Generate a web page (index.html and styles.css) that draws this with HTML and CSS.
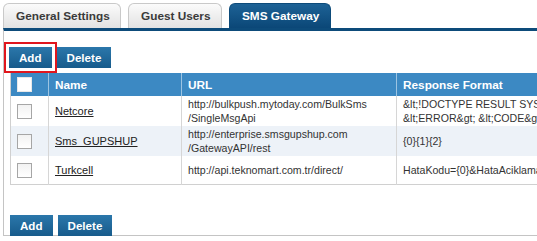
FILE: index.html
```html
<!DOCTYPE html>
<html lang="en">
<head>
    <meta charset="UTF-8">
    <title>SMS Gateway</title>
    <link rel="stylesheet" href="styles.css">
</head>
<body>

    <div class="tabs">
        <a class="tab" href="#">General Settings</a>
        <a class="tab" href="#">Guest Users</a>
        <a class="tab active" href="#">SMS Gateway</a>
    </div>

    <div class="panel">
        <div class="toolbar top">
            <button class="btn highlight">Add</button>
            <button class="btn">Delete</button>
        </div>

        <table class="grid">
            <colgroup>
                <col class="col-check">
                <col class="col-name">
                <col class="col-url">
                <col class="col-format">
            </colgroup>
            <thead>
                <tr>
                    <th><span class="check head-check"></span></th>
                    <th>Name</th>
                    <th>URL</th>
                    <th>Response Format</th>
                </tr>
            </thead>
            <tbody>
                <tr>
                    <td><span class="check"></span></td>
                    <td><a href="#">Netcore</a></td>
                    <td>http://bulkpush.mytoday.com/BulkSms<br>/SingleMsgApi</td>
                    <td>&amp;lt;!DOCTYPE RESULT SYSTEM &amp;quot;<br>&amp;lt;ERROR&amp;gt; &amp;lt;CODE&amp;gt;{0}&amp;lt;/CODE&amp;gt;</td>
                </tr>
                <tr class="alt">
                    <td><span class="check"></span></td>
                    <td><a href="#">Sms_GUPSHUP</a></td>
                    <td>http://enterprise.smsgupshup.com<br>/GatewayAPI/rest</td>
                    <td>{0}{1}{2}</td>
                </tr>
                <tr>
                    <td><span class="check"></span></td>
                    <td><a href="#">Turkcell</a></td>
                    <td>http://api.teknomart.com.tr/direct/</td>
                    <td>HataKodu={0}&amp;HataAciklama={1}</td>
                </tr>
            </tbody>
        </table>

        <div class="toolbar bottom">
            <button class="btn">Add</button>
            <button class="btn">Delete</button>
        </div>
    </div>

</body>
</html>
```

FILE: styles.css
```css
body {
    margin: 0;
    font-family: "Liberation Sans", Arial, sans-serif;
    background: #fff;
    overflow: hidden;
}

/* --- tabs --- */
.tabs {
    display: flex;
    gap: 7px;
    padding: 3px 0 0 3px;
}

.tab {
    height: 24px;
    line-height: 25px;
    padding: 0 12px;
    border: 1px solid #c9c9c9;
    border-bottom: none;
    border-radius: 6px 6px 0 0;
    background: linear-gradient(#fbfbfb, #e2e2e2);
    color: #3a3a3a;
    font-size: 11.8px;
    font-weight: bold;
    text-decoration: none;
    white-space: nowrap;
}

.tab:nth-child(1) { width: 92px; }
.tab:nth-child(2) { width: 68px; text-align: center; }

.tab.active {
    width: 76px;
    text-align: center;
    border-color: #0d4b7a;
    background: linear-gradient(#1d6296, #0b4777);
    color: #fff;
}

/* --- panel --- */
.panel {
    width: 700px;
    height: 204px;
    margin-left: 3px;
    border-top: 3px solid #0d4b7a;
    border-left: 1px solid #c4c4c4;
    border-bottom: 1px solid #c4c4c4;
    padding-left: 5px;
}

.toolbar {
    display: flex;
    gap: 5px;
}

.toolbar.top { padding-top: 16px; }
.toolbar.bottom { padding: 30px 0 0 1px; }

.btn {
    height: 21px;
    padding: 0 10px;
    border: none;
    background: linear-gradient(#2b77ab, #175b8b);
    color: #fff;
    font-family: inherit;
    font-size: 11.6px;
    font-weight: bold;
    cursor: pointer;
}

.btn.highlight {
    outline: 2px solid #e0161d;
    outline-offset: 3px;
}

/* --- table --- */
.grid {
    margin: 5px 0 0 1px;
    border-collapse: collapse;
    table-layout: fixed;
    width: 560px;
    border-left: 1px solid #d0d0d0;
    border-bottom: 1px solid #d0d0d0;
}

.col-check { width: 38px; }
.col-name { width: 133px; }
.col-url { width: 215px; }
.col-format { width: 174px; }

.grid th {
    height: 23px;
    padding: 0 6px;
    background: #3c89c3;
    border-left: 1px solid #9cc4e2;
    color: #fff;
    font-size: 11.8px;
    font-weight: bold;
    text-align: left;
    white-space: nowrap;
}

.grid th:first-child { border-left: none; }

.grid td {
    height: 26px;
    padding: 1px 6px;
    border-left: 1px solid #d6d6d6;
    color: #333;
    font-size: 10.6px;
    line-height: 14px;
    white-space: nowrap;
    overflow: hidden;
}

.grid td:first-child { border-left: none; }

.grid tr.alt td { background: #edf2f8; }

.grid a {
    color: #222;
    font-size: 11px;
    text-decoration: underline;
}

.check {
    display: block;
    width: 13px;
    height: 13px;
    border: 1px solid #a6a6a6;
    background: linear-gradient(#f2f2f2, #fff);
}

.check.head-check {
    border-color: #e8e8e8;
    background: #fff;
}
```
